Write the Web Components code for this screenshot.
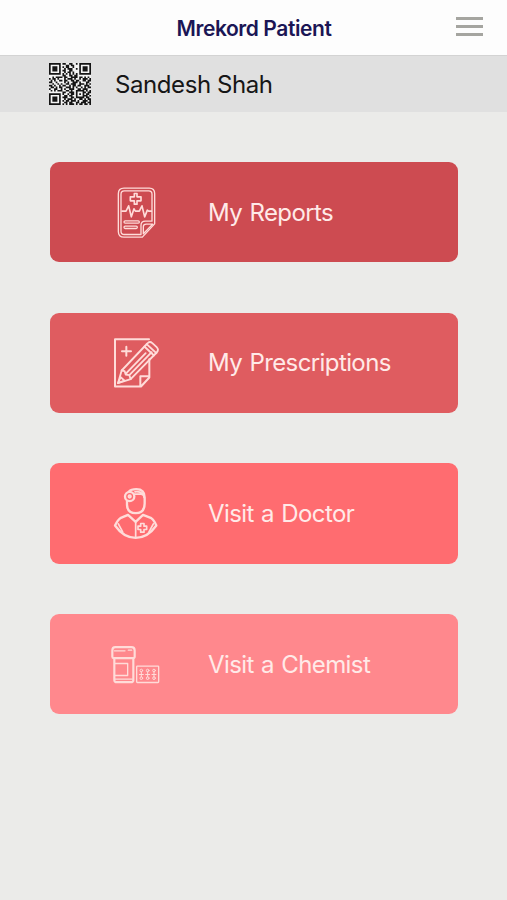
<!DOCTYPE html>
<html lang="en">
<head>
<meta charset="utf-8">
<title>Mrekord Patient</title>
<style>
  body{ margin:0; background:#ebebe9; font-family:Inter,"Liberation Sans",sans-serif; }
</style>
</head>
<body>
<patient-app>
  <app-header slot="header">Mrekord Patient</app-header>
  <patient-bar slot="header">Sandesh Shah</patient-bar>
  <menu-card icon="report" style="--card:#cd4b51">My Reports</menu-card>
  <menu-card icon="prescription" style="--card:#df5c60">My Prescriptions</menu-card>
  <menu-card icon="doctor" style="--card:#ff6c70">Visit a Doctor</menu-card>
  <menu-card icon="chemist" style="--card:#ff888d">Visit a Chemist</menu-card>
</patient-app>

<script>
/* viewBox + strokes for each card icon */
const ICONS={
  report:{
    box:'0 -1.5 195 225',
    body:`
      <g stroke-width="4">
        <path d="M57 38H133Q149 38 149 54V145L112 185H57Q40 185 40 168V55Q40 38 57 38Z"/>
        <path d="M58 46H131Q141 46 141 56V137H121Q108 137 108 150V177H58Q48 177 48 167V56Q48 46 58 46Z"/>
        <path d="M115 175V154Q115 146 124 146H143Z"/>
        <path stroke-width="5" d="M88 54H96V64H108V76H96V86H88V76H76V64H88Z"/>
        <rect x="57" y="136" width="46" height="7" rx="3.5"/>
        <rect x="57" y="152" width="40" height="7" rx="3.5"/>
      </g>
      <path stroke-width="5" d="M51 107H63L71 91L79 124L87 100L91 107H103L111 91L119 124L127 104L131 107H139"/>`
  },
  prescription:{
    box:'0 .5 195 225',
    body:`
      <path stroke-width="6" d="M132 43H30V185H108L133 158V103M106 185V154H133M64 66V93M51 79H78"/>
      <g stroke-width="5.5">
        <path d="M39 175L50 137L127 56Q134 48 142 55L155 67Q163 75 155 83L77 163Z"/>
        <path d="M50 137L59 139L62 149L73 151L77 163M73 151L140 82M64 145L122 85"/>
        <path d="M118 65L147 92M125 58L154 85M39 175L47 157L58 167Z"/>
      </g>`
  },
  doctor:{
    box:'0 -6.5 195 225',
    body:`
      <g stroke-width="7">
        <circle cx="74" cy="55" r="14"/><circle cx="74" cy="55" r="3"/>
        <path d="M72 40Q78 33 94 33Q119 33 119 58V76Q119 105 92 105Q67 105 66 80V68"/>
        <path stroke-width="5" d="M88 48H107Q117 48 117 58M90 41Q103 39 112 46"/>
        <path d="M69 110L46 120Q38 125 30 142Q56 179 92 179Q128 179 154 142Q147 125 139 120L114 110L92 131Z"/>
        <path stroke-width="5" d="M92 131V177M40 137L53 161M145 137L132 161"/>
        <path stroke-width="5" d="M107 136H117V144H125V154H117V162H107V154H99V144H107Z"/>
      </g>`
  },
  chemist:{
    box:'0 -25.5 195 225',
    body:`
      <g stroke-width="6.5">
        <path d="M31 35H79Q89 35 89 45V64Q89 68 84 68H26Q22 68 22 64V45Q22 35 31 35Z"/>
        <path d="M28 70V134Q28 140 36 140H77Q85 140 85 134V70"/>
        <path stroke-width="4" d="M28 46H60M70 44H80M30 84H68V120H30M30 131H82"/>
      </g>
      <g stroke-width="4">
        <rect x="95" y="92" width="66" height="49" rx="2"/>
        <g stroke-width="3">
          <circle cx="109" cy="105" r="4"/><circle cx="128" cy="105" r="4"/><circle cx="147" cy="105" r="4"/>
          <circle cx="109" cy="128" r="4"/><circle cx="128" cy="128" r="4"/><circle cx="147" cy="128" r="4"/>
          <path d="M103 117H115M122 117H134M141 117H153M109 109V124M128 109V124M147 109V124"/>
        </g>
      </g>`
  }
};

/* 25 x 25 modules, # is dark */
const QR=[
  '#######.##..##..#.#######',
  '#.....#...##.##...#.....#',
  '#.###.#.#.##..#...#.###.#',
  '#.###.#..#.###..#.#.###.#',
  '#.###.#.##..##....#.###.#',
  '#.....#..#.##.#...#.....#',
  '#######.#.#.#.#.#.#######',
  '........##..##.##........',
  '..#.####.##..####.##.#.#.',
  '#.##.#...#.###.#..#.###.#',
  '.#.#..##.##..##.##..##.##',
  '##..#....#.#..###.#...##.',
  '..#..#.#..##.###..###.#.#',
  '##.#..#.##..#.##.##..###.',
  '.##.#.##..###.#.#..#.#.##',
  '#..##..#.#..###..##.###..',
  '.#.#.###..##.#..#####.#.#',
  '........##..###.#...##.##',
  '#######.#..#.##.#.#.#.##.',
  '#.....#..##.##..#...###.#',
  '#.###.#.###..##.#####.##.',
  '#.###.#..#.###.#..##.#.##',
  '#.###.#.#.##.###.#..###.#',
  '#.....#..##.##..##.###.##',
  '#######.#.#.###.#.##.##.#'
];

class PatientApp extends HTMLElement {
  constructor(){
    super();
    this.attachShadow({mode:'open'});
    this.shadowRoot.innerHTML=`
      <style>
        :host{ display:block; min-height:900px; background:#ebebe9; }
        main{ display:grid; grid-auto-rows:100.4px; gap:50.3px; padding:50px 49px 0 50px; }
      </style>
      <slot name="header"></slot>
      <main><slot></slot></main>
    `;
  }
}
customElements.define('patient-app',PatientApp);

class AppHeader extends HTMLElement {
  constructor(){
    super();
    this.attachShadow({mode:'open'});
    this.shadowRoot.innerHTML=`
      <style>
        :host{
          display:grid; grid-template-columns:1fr auto 1fr; align-items:center;
          box-sizing:border-box; height:56px; padding:0 24px;
          background:#fdfdfd; border-bottom:1px solid #d3d3d3;
          color:#1b1655; font-size:21px; font-weight:600; line-height:26px; letter-spacing:-.42px;
        }
        h1{ grid-column:2; margin:3px 0 0 1px; font:inherit; }
        .menu{ display:grid; gap:5.3px; width:27px; justify-self:end; margin-bottom:2px; }
        .menu i{ height:3px; background:#a5a5a0; }
      </style>
      <h1><slot></slot></h1>
      <div class="menu"><i></i><i></i><i></i></div>
    `;
  }
}
customElements.define('app-header',AppHeader);

class PatientBar extends HTMLElement {
  constructor(){
    super();
    this.attachShadow({mode:'open'});
    this.shadowRoot.innerHTML=`
      <style>
        :host{
          display:flex; align-items:center; gap:24px;
          box-sizing:border-box; height:56px; padding-left:49px;
          background:#e0e0e0; color:#161616; font-size:24px; line-height:30px; letter-spacing:-.42px;
        }
        svg{ display:block; width:42px; height:42px; background:#f4f4f4; }
        span{ padding-top:1px; }
      </style>
      <svg viewBox="0 0 25 25"><path fill="#151515"/></svg>
      <span><slot></slot></span>
    `;
    let d='';
    QR.forEach((row,y)=>{
      [...row].forEach((c,x)=>{ if(c==='#') d+=`M${x} ${y}h1v1h-1z`; });
    });
    this.shadowRoot.querySelector('path').setAttribute('d',d);
  }
}
customElements.define('patient-bar',PatientBar);

class MenuCard extends HTMLElement {
  constructor(){
    super();
    this.attachShadow({mode:'open'});
    this.shadowRoot.innerHTML=`
      <style>
        :host{
          display:flex; align-items:center; gap:38px; padding-left:55px;
          border-radius:9px; background:var(--card);
          color:#ffeae8; font-size:24px; line-height:30px; letter-spacing:-.6px; word-spacing:1.2px;
        }
        svg{ width:65px; height:75px; flex:none; fill:none; stroke:#ffdcd9; stroke-linejoin:round; stroke-linecap:round; }
        span{ padding-top:1px; }
      </style>
      <svg></svg>
      <span><slot></slot></span>
    `;
  }

  connectedCallback(){
    const icon=ICONS[this.getAttribute('icon')];
    const svg=this.shadowRoot.querySelector('svg');
    svg.setAttribute('viewBox',icon.box);
    svg.innerHTML=icon.body;
  }
}
customElements.define('menu-card',MenuCard);
</script>
</body>
</html>
